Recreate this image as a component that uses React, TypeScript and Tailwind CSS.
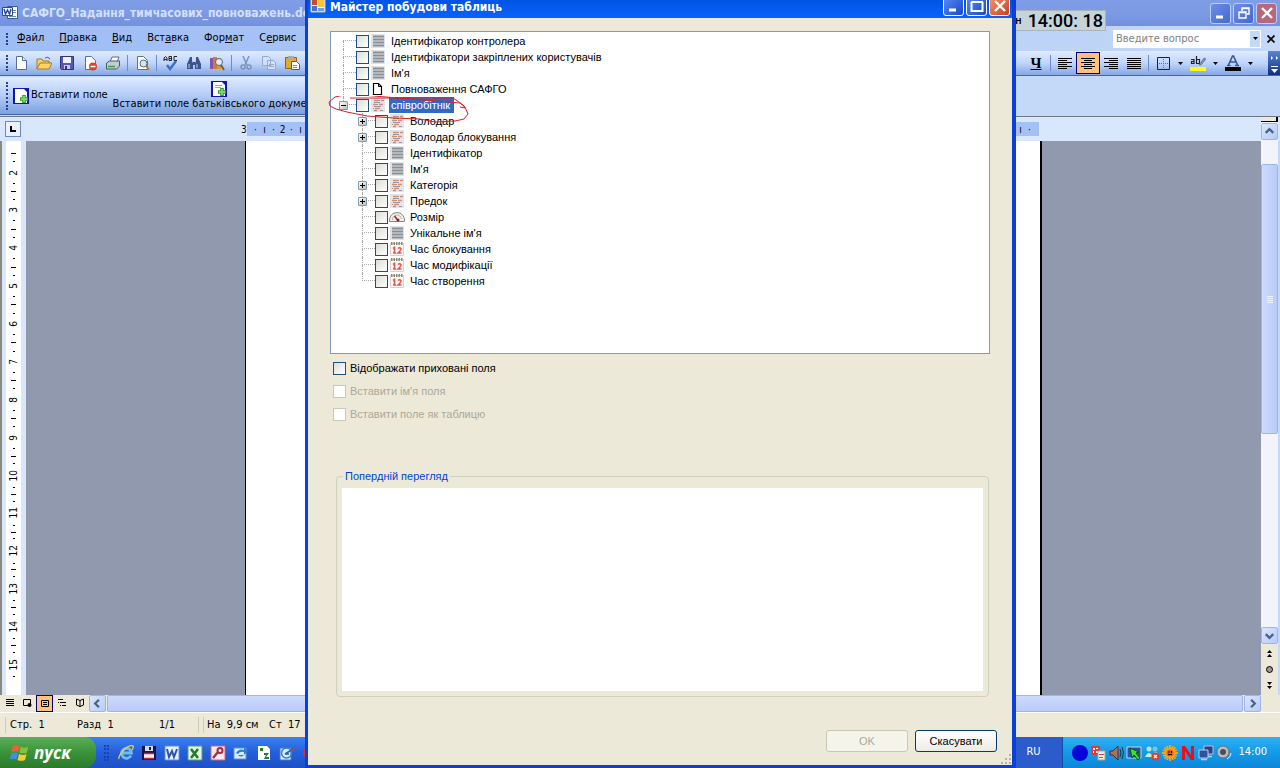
import type { ReactNode } from 'react'
import clsx from 'clsx'

type IconName = 'lines' | 'code' | 'doc' | 'gauge' | 'calendar'

interface TreeItem {
  label: string
  icon: IconName
  level: 0 | 1
  expander?: '+' | '-'
  selected?: boolean
}

const tree: TreeItem[] = [
  { label: 'Ідентифікатор контролера', icon: 'lines', level: 0 },
  { label: 'Ідентифікатори закріплених користувачів', icon: 'lines', level: 0 },
  { label: "Ім'я", icon: 'lines', level: 0 },
  { label: 'Повноваження САФГО', icon: 'doc', level: 0 },
  { label: 'співробітнік', icon: 'code', level: 0, expander: '-', selected: true },
  { label: 'Володар', icon: 'code', level: 1, expander: '+' },
  { label: 'Володар блокування', icon: 'code', level: 1, expander: '+' },
  { label: 'Ідентифікатор', icon: 'lines', level: 1 },
  { label: "Ім'я", icon: 'lines', level: 1 },
  { label: 'Категорія', icon: 'code', level: 1, expander: '+' },
  { label: 'Предок', icon: 'code', level: 1, expander: '+' },
  { label: 'Розмір', icon: 'gauge', level: 1 },
  { label: "Унікальне ім'я", icon: 'lines', level: 1 },
  { label: 'Час блокування', icon: 'calendar', level: 1 },
  { label: 'Час модифікації', icon: 'calendar', level: 1 },
  { label: 'Час створення', icon: 'calendar', level: 1 },
]

const menu = [
  ['', 'Ф', 'айл'],
  ['', 'П', 'равка'],
  ['', 'В', 'ид'],
  ['Вст', 'а', 'вка'],
  ['Фор', 'м', 'ат'],
  ['С', 'е', 'рвис'],
]

const rulerMarks = ['·', 'ı', '·', '2', '·', 'ı', '·', '1']

const checkboxClass =
  'h-[13px] w-[13px] shrink-0 appearance-none border border-[#1c5180] bg-linear-to-br from-[#dcdcd7] to-white disabled:border-[#cac8bb] disabled:bg-none disabled:bg-white'

function Icon({ children, className = 'h-4 w-4' }: { children: ReactNode; className?: string }) {
  return (
    <svg viewBox="0 0 16 16" className={clsx('shrink-0', className)} aria-hidden="true">
      {children}
    </svg>
  )
}

function TreeIcon({ name }: { name: IconName }) {
  if (name === 'lines')
    return (
      <Icon>
        <path d="M1 1h14v14H1z" fill="#dfe3e8" />
        <path d="M3 3.500h11M3 6.500h11M3 9.500h11M3 12.500h11" stroke="#8b8d92" strokeWidth="1.800" />
      </Icon>
    )
  if (name === 'code')
    return (
      <Icon>
        <path d="M1 1h14v14H1z" fill="#e4e4e8" />
        <path d="M4 3.500h4M11 3.500h3M3 7.500h3M9 7.500h4M5 11.500h5M4 13.500h3" stroke="#d88a78" strokeWidth="1.300" />
        <path d="M8 3.500h2M4 5.500h6M6 7.500h2M4 9.500h7M3 11.500h1M10 13.500h3" stroke="#96969a" strokeWidth="1.100" />
      </Icon>
    )
  if (name === 'doc')
    return (
      <Icon>
        <path d="M3.500 2.500h5l3 3v8h-8z" fill="#fff" stroke="#000" strokeWidth="1.200" />
        <path d="M8.500 2.500v3h3" fill="none" stroke="#000" />
      </Icon>
    )
  if (name === 'gauge')
    return (
      <Icon>
        <path d="M.500 12.500v-1.500a7 7 0 0 1 15 0v1.500z" fill="#f3efed" stroke="#8f8580" />
        <path d="M3.500 11a4.500 4.500 0 0 1 9-1" fill="none" stroke="#c9aea2" />
        <path d="M9 11.500 5.500 7" stroke="#8c3428" strokeWidth="1.600" />
        <circle cx="9" cy="11" r="1.500" fill="#733" />
      </Icon>
    )
  return (
    <Icon>
      <path d="M1.500 2.500h13v12h-13z" fill="#f9f6f6" stroke="#d6d2d2" />
      <path d="M2 2.500h12" stroke="#8d8478" strokeWidth="3" strokeDasharray="1.500 1" />
      <path d="M4 7.500 5.500 6.500v5.500M4 12h3M9 7.500q1.500-1.500 3 0 .3 1.500-3 4.500h3.500" fill="none" stroke="#e2574a" strokeWidth="1.600" />
    </Icon>
  )
}

function Guide({ first, last, expander }: { first: boolean; last: boolean; expander?: '+' | '-' }) {
  return (
    <div className="relative flex h-4 w-[22px] shrink-0 flex-col pl-[9px]">
      <div className={clsx('h-2 border-b border-dotted border-[#a8a8a8]', !first && 'border-l')} />
      <div className={clsx('h-2 border-dotted border-[#a8a8a8]', !last && 'border-l')} />
      {expander && (
        <button
          aria-label={expander === '+' ? 'Розгорнути' : 'Згорнути'}
          className="absolute top-1 left-[5px] h-[9px] w-[9px] rounded-[1px] border border-[#8098b0] bg-linear-to-br from-white to-[#c3bab0]"
        >
          <svg viewBox="0 0 7 7" className="h-[7px] w-[7px]" aria-hidden="true">
            <path d={expander === '+' ? 'M1 3.5h5M3.5 1v5' : 'M1 3.5h5'} stroke="#000" />
          </svg>
        </button>
      )}
    </div>
  )
}

function FieldTree() {
  return (
    <ul className="flex h-[323px] flex-col border border-[#7f9db9] bg-white pt-px pl-[3px]">
      {tree.map((item, i) => {
        const isLast = item.level === 0 ? item.expander === '-' : i === tree.length - 1
        return (
          <li key={i} className={clsx('flex h-4 items-center', item.level === 1 && 'pl-[19px]')}>
            <Guide first={i === 0} last={isLast} expander={item.expander} />
            <label className="flex items-center">
              <input type="checkbox" className={checkboxClass} />
              <span className="ml-px flex">
                <TreeIcon name={item.icon} />
              </span>
              <span
                className={clsx(
                  'ml-[3px] h-4 px-[2px] leading-4 whitespace-nowrap',
                  item.selected && 'bg-[#316ac5] pr-1 text-white',
                )}
              >
                {item.label}
              </span>
            </label>
          </li>
        )
      })}
    </ul>
  )
}

function CaptionButton({ kind, muted }: { kind: 'min' | 'max' | 'restore' | 'close'; muted?: boolean }) {
  const names = { min: 'Згорнути', max: 'Розгорнути', restore: 'Відновити', close: 'Закрити' }
  return (
    <button
      aria-label={names[kind]}
      className={clsx(
        'flex h-[21px] w-[21px] items-center justify-center rounded-[3px] border',
        muted ? 'border-[#b9cdf5]' : 'border-white',
        kind === 'close'
          ? muted
            ? 'bg-[#b9677c]'
            : 'bg-linear-to-br from-[#f0957a] to-[#cc3c12]'
          : muted
            ? 'bg-linear-to-br from-[#6d8ee8] to-[#4468d0]'
            : 'bg-linear-to-br from-[#5c8cf5] to-[#1947cb]',
      )}
    >
      <svg viewBox="0 0 16 16" className="h-4 w-4" fill="none" stroke="#fff" aria-hidden="true">
        {kind === 'min' && <path d="M3 12h7" strokeWidth="3" />}
        {kind === 'max' && <path d="M2 4h12M2.500 4v9h11V4" strokeWidth="2" />}
        {kind === 'restore' && <path d="M6 6V3h7v6h-2M6 3.500h7M3 7h7v6H3zM3 7.500h7" strokeWidth="1.400" />}
        {kind === 'close' && <path d="m3 3 10 10m0-10L3 13" strokeWidth="2.400" />}
      </svg>
    </button>
  )
}

function Grip({ className }: { className?: string }) {
  return <span className={clsx('w-[3px] shrink-0 border-l-2 border-dotted border-[#27418c]', className)} />
}

function Divider() {
  return <span className="-mx-px h-4 w-px bg-[#6a8ccb]" />
}

function Tool({ label, children, active }: { label: string; children: ReactNode; active?: boolean }) {
  return (
    <button
      aria-label={label}
      className={clsx('flex shrink-0', active && '-mx-[4px] border border-[#000080] bg-[#ffc27a] px-[3px] py-[2px]')}
    >
      <Icon>{children}</Icon>
    </button>
  )
}

const page = <path d="M3.500 1.500h6l4 4v9h-10z" fill="#fff" stroke="#5b6f9c" />

function Toolbar() {
  return (
    <div className="flex h-[25px] items-center gap-[7px] border-b border-[#4266b0] bg-linear-to-b from-[#dfebff] via-[#c0d5fb] to-[#85a7e4] pl-[6px]">
      <Grip className="-mr-[3px] h-4" />
      <Tool label="Создать">
        {page}
        <path d="M9.500 1.500v4h4" fill="#dbe4f5" stroke="#5b6f9c" />
      </Tool>
      <Tool label="Открыть">
        <path d="M1 14V4h5l1 2h6v3" fill="#f3cf6d" stroke="#a77c22" />
        <path d="m1 14 3-6h12l-3 6z" fill="#ffd268" stroke="#a77c22" />
        <path d="M9 3q3-2 5 1" fill="none" stroke="#365ea8" />
      </Tool>
      <Tool label="Сохранить">
        <path d="M1.500 1.500h13v13h-12l-1-1z" fill="#5758b8" stroke="#33337c" />
        <path d="M4 2h8v6H4z" fill="#eef1fb" />
        <path d="M5 10h6v4H5z" fill="#c9cde2" />
        <path d="M6 11h2v3H6z" fill="#33337c" />
      </Tool>
      <Tool label="Разрешения">
        {page}
        <circle cx="11" cy="11.500" r="4" fill="#d8432c" />
        <path d="M8.500 11.500h5" stroke="#fff" strokeWidth="1.600" />
      </Tool>
      <Tool label="Печать">
        <path d="m5 7 2-5h7l-2 5" fill="#fff" stroke="#5f6f86" />
        <path d="m1.500 8 3-2h10v5l-3 3h-10z" fill="#c3cbd6" stroke="#4d596d" />
        <path d="M3 11.500h7" stroke="#3aa03a" strokeWidth="1.500" />
      </Tool>
      <Divider />
      <Tool label="Предварительный просмотр">
        {page}
        <circle cx="9.500" cy="8.500" r="3.500" fill="#cfe6f8" stroke="#55667a" />
        <path d="m12 11 3 4" stroke="#b87a2c" strokeWidth="2" />
      </Tool>
      <Divider />
      <Tool label="Орфография">
        <path d="M1 6V3l1.500-1.500L4 3v3M1 4.500h3M6 1.500v4h2.500v-4zM6 3.500h3M14 1.500h-3v4h3" fill="none" stroke="#222" />
        <path d="m4 10 3 4 6-8" fill="none" stroke="#3e6fd0" strokeWidth="2.500" />
      </Tool>
      <Tool label="Найти">
        <path d="M4 2h2v4l1 2v6H1V9zM12 2h-2v4L9 8v6h6V9zM7 7h2v3H7z" fill="#3a5490" />
        <path d="M3 9v4M11 9v4" stroke="#b9cdf5" />
      </Tool>
      <Tool label="Справочные материалы">
        <path d="M1 3h3v11H1z" fill="#7c55b8" />
        <path d="M4 2h4v12H4z" fill="#d8792c" />
        <path d="M8 3h4v11H8z" fill="#c79d3d" />
        <circle cx="10" cy="7" r="3.500" fill="#dceefa" stroke="#56677c" />
        <path d="m12 10 3 5" stroke="#8c5a20" strokeWidth="2" />
      </Tool>
      <Divider />
      <Tool label="Вырезать">
        <path d="m5 1 4 9m2-9-4 9" stroke="#7d93be" strokeWidth="1.500" />
        <circle cx="5" cy="12" r="2" fill="none" stroke="#7d93be" strokeWidth="1.500" />
        <circle cx="11" cy="12" r="2" fill="none" stroke="#7d93be" strokeWidth="1.500" />
      </Tool>
      <Tool label="Копировать">
        <path d="M1.500 1.500h6l2 2v7h-8zM6.500 5.500h6l2 2v7h-8z" fill="#d5e0f6" stroke="#93a7d0" />
        <path d="M8 9.500h5M8 11.500h5" stroke="#93a7d0" />
      </Tool>
      <Tool label="Вставить">
        <path d="M1.500 2.500h11v11h-11z" fill="#e3a92f" stroke="#8c631a" />
        <path d="M4 1h6v3H4z" fill="#a9a9a9" />
        <path d="M7.500 6.500h5l3 3v5h-8z" fill="#fff" stroke="#4c5d86" />
        <path d="M9 10.500h4M9 12.500h4" stroke="#7789b5" />
      </Tool>

      <div className="ml-auto flex h-full items-center gap-[7px]">
        <button className="w-4 text-center font-['Liberation_Serif'] text-[15px] leading-4 font-bold underline">Ч</button>
        <Divider />
        <Tool label="По левому краю">
          <path d="M1 3.500h14M1 5.500h9M1 7.500h14M1 9.500h9M1 11.500h14M1 13.500h9" stroke="#000" />
        </Tool>
        <Tool label="По центру" active>
          <path d="M1 3.500h14M4 5.500h8M1 7.500h14M4 9.500h8M1 11.500h14M4 13.500h8" stroke="#000" />
        </Tool>
        <Tool label="По правому краю">
          <path d="M1 3.500h14M6 5.500h9M1 7.500h14M6 9.500h9M1 11.500h14M6 13.500h9" stroke="#000" />
        </Tool>
        <Tool label="По ширине">
          <path d="M1 3.500h14M1 5.500h14M1 7.500h14M1 9.500h14M1 11.500h14M1 13.500h14" stroke="#000" />
        </Tool>
        <Divider />
        <Tool label="Границы">
          <path d="M2.500 2.500h12v12h-12z" fill="none" stroke="#222" />
          <path d="M8.500 4v10M4 8.500h10" stroke="#5673a8" strokeDasharray="1 1" />
        </Tool>
        <DropArrow />
        <Tool label="Выделение цветом">
          <path d="M0 12h16v4H0z" fill="#ffff00" />
          <path d="M1 4.500h3v4H1.500v-2h3M6.500 1v7.500h3v-4h-3" fill="none" stroke="#222" strokeWidth="1.200" />
          <path d="m9 10 5-7 2 1-5 6z" fill="#8295b8" stroke="#4d5f86" strokeWidth=".600" />
        </Tool>
        <DropArrow />
        <Tool label="Цвет шрифта">
          <path d="M0 12h16v4H0z" fill="#000" />
          <path d="m3.500 10 4-9h1l4 9M5.500 7h5M2 10.500h3.500M10 10.500h4" fill="none" stroke="#3b5791" strokeWidth="1.600" />
        </Tool>
        <DropArrow />
        <button aria-label="Параметры панели" className="ml-2 flex h-full w-3 items-center bg-linear-to-b from-[#5b84d4] to-[#0f2f86]">
          <svg viewBox="0 0 12 24" className="h-6 w-3" aria-hidden="true">
            <path d="m3 5 2 2-2 2zM8 5l2 2-2 2zM3 18h7l-3.500 4zM3 15h7v1H3z" fill="#fff" />
          </svg>
        </button>
      </div>
    </div>
  )
}

function DropArrow() {
  return (
    <svg viewBox="0 0 5 3" className="h-[3px] w-[5px]" aria-hidden="true">
      <path d="M0 0h5L2.500 3z" />
    </svg>
  )
}

function InsertIcon({ lines }: { lines?: boolean }) {
  return (
    <Icon>
      <path d="M0 0h16v16H0z" fill="#1414b4" />
      <path d="M2 1h9l3 3v11H2z" fill="#fff" />
      {lines && <path d="M4 4.500h7M4 6.500h6" stroke="#9aa3c9" />}
      <path d="M11 7v8M7 11h8" stroke="#2f9e2a" strokeWidth="3.600" />
      <path d="M11 8v6M8 11h6" stroke="#74d95c" strokeWidth="2" />
    </Icon>
  )
}

function ScrollButton({ dir }: { dir: 'up' | 'down' | 'left' | 'right' }) {
  const d = {
    up: 'm4 9.500 4-4 4 4',
    down: 'm4 6.500 4 4 4-4',
    left: 'm9.500 4-4 4 4 4',
    right: 'm6.500 4 4 4-4 4',
  }
  return (
    <button
      aria-label={`Прокрутка ${dir}`}
      className="h-[17px] w-[17px] shrink-0 rounded-[2px] border border-[#9eb5e6] bg-linear-to-br from-[#dbe6fe] to-[#b6cbf9]"
    >
      <svg viewBox="0 0 16 16" className="h-[15px] w-[15px]" aria-hidden="true">
        <path d={d[dir]} fill="none" stroke="#4d6185" strokeWidth="2.400" />
      </svg>
    </button>
  )
}

function WordWindow() {
  return (
    <div className="flex min-h-0 flex-1 flex-col bg-[#c4d8f8]">
      <header className="flex h-[26px] shrink-0 items-center bg-linear-to-b from-[#7f9ce6] via-[#7d9ae5] to-[#7290de] pr-[3px] pl-[2px]">
        <Icon>
          <path d="M5.500 1.500h10v12h-10z" fill="#fff" stroke="#3c5a9c" />
          <path d="M11 5.500h3M11 7.500h3M7 11.500h7" stroke="#6f88c0" />
          <path d="M.500 2.500h10v8H.500z" fill="#eef3ff" stroke="#2a4b97" />
          <path d="m2 4 1.500 5L5.500 5l2 4L9 4" fill="none" stroke="#2a4b97" strokeWidth="1.400" />
        </Icon>
        <h1 className="ml-1 font-['DejaVu_Sans_Condensed'] text-[12px] font-bold whitespace-nowrap text-[#d3e0fa]">
          САФГО_Надання_тимчасових_повноважень.doc
        </h1>
        <div className="ml-auto flex gap-[2px]">
          <CaptionButton kind="min" muted />
          <CaptionButton kind="restore" muted />
          <CaptionButton kind="close" muted />
        </div>
      </header>

      <nav className="flex h-[25px] shrink-0 items-center bg-linear-to-r from-[#9ebcf5] to-[#c4d8f8] pl-[6px]">
        <Grip className="h-3" />
        <div className="ml-2 flex gap-[15px]">
          {menu.map(([before, key, after]) => (
            <button key={before + key}>
              {before}
              <u>{key}</u>
              {after}
            </button>
          ))}
        </div>
        <div className="ml-auto flex items-center">
          <input
            aria-label="Введите вопрос"
            placeholder="Введите вопрос"
            className="h-[18px] w-[136px] bg-white pl-[3px] placeholder:text-[#808080]"
          />
          <button aria-label="Список вопросов" className="flex h-[18px] w-3 items-center justify-center border border-white bg-[#c4d8f8]">
            <DropArrow />
          </button>
          <button aria-label="Закрыть документ" className="mr-[5px] ml-[6px]">
            <svg viewBox="0 0 8 8" className="h-2 w-2" aria-hidden="true">
              <path d="m.5.500 7 7m0-7-7 7" stroke="#000" strokeWidth="1.700" />
            </svg>
          </button>
        </div>
      </nav>

      <Toolbar />

      <div className="h-[40px] shrink-0 pt-px">
        <div className="flex h-[38px] w-[400px] items-center border-b border-[#4266b0] bg-linear-to-b from-[#dfebff] via-[#b4ccf7] to-[#7b9fe0] pl-[6px]">
          <Grip className="h-7" />
          <button className="ml-1 flex items-center gap-[2px] whitespace-nowrap">
            <InsertIcon />
            Вставити поле
          </button>
          <button className="ml-[5px] flex flex-col items-center whitespace-nowrap">
            <InsertIcon lines />
            <span className="leading-[14px]">Вставити поле батьківського документа</span>
          </button>
        </div>
      </div>

      <div className="flex h-[25px] shrink-0 items-center border-t border-[#6f7683] bg-[#d8e7fc]">
        <div className="ml-[5px] flex h-4 w-4 items-center justify-center border border-[#6d87c4] bg-[#eaf1fd]">
          <svg viewBox="0 0 6 6" className="h-[6px] w-[6px]" aria-hidden="true">
            <path d="M1 0v5h5" fill="none" stroke="#000" strokeWidth="2" />
          </svg>
        </div>
        <span className="ml-[220px] w-[6px] text-[10px]">3</span>
        <div className="mr-[241px] flex h-[14px] flex-1 items-center bg-[#a4c0f5] pl-1 text-[10px]">
          {rulerMarks.map((mark, i) => (
            <span key={i} className="w-[9px] text-center">
              {mark}
            </span>
          ))}
          <span className="ml-auto w-[9px] text-center">ı</span>
          <span className="mr-[5px] w-[9px] text-center">·</span>
        </div>
      </div>

      <div className="flex min-h-0 flex-1">
        <div className="flex w-[26px] shrink-0 flex-col border-l-2 border-[#8a8a80] bg-[#d8e7fc] pl-1">
          <div className="flex w-[15px] flex-1 flex-col bg-white pt-3 pb-3 text-[10px]">
            {Array.from({ length: 14 }, (_, i) => (
              <div key={i} className="flex flex-1 flex-col items-center justify-between">
                <span className="h-px w-[5px] bg-black" />
                <span className="h-px w-[2px] bg-black" />
                <span className="rotate-180 leading-[15px] [writing-mode:vertical-rl]">{i + 2}</span>
                <span className="h-px w-[2px] bg-black" />
                <span />
              </div>
            ))}
          </div>
        </div>
        <main className="flex flex-1 bg-[#9199ae] pr-[219px] pl-[219px]">
          <div className="flex-1 border-r-2 border-l border-black bg-white" />
        </main>
        <div className="-mt-6 mr-[2px] flex w-[17px] shrink-0 flex-col bg-[#f3f4fa]">
          <div className="mb-px h-[5px] shrink-0 border-r-2 border-b border-black bg-[#ece9d8]" />
          <ScrollButton dir="up" />
          <div className="flex flex-1 flex-col pt-6">
            <div className="flex h-[270px] flex-col items-center justify-center gap-px rounded-[2px] border border-[#9eb5e6] bg-linear-to-r from-[#cddafd] to-[#b9cbf8]">
              {[0, 1, 2, 3].map((n) => (
                <span key={n} className="h-px w-[6px] bg-[#eef4fe]" />
              ))}
            </div>
          </div>
          <ScrollButton dir="down" />
          <div className="flex h-[51px] shrink-0 flex-col items-center justify-between bg-[#ece9d8] py-[6px]">
            <svg viewBox="0 0 7 7" className="h-[7px] w-[7px]" aria-hidden="true">
              <path d="m1 3 2.500-3L6 3zM1 7l2.500-3L6 7z" />
            </svg>
            <span className="h-[7px] w-[7px] rounded-full border border-black bg-[#9a9a9a]" />
            <svg viewBox="0 0 7 7" className="h-[7px] w-[7px]" aria-hidden="true">
              <path d="m1 0 2.500 3L6 0zM1 4l2.500 3L6 4z" />
            </svg>
          </div>
        </div>
      </div>

      <div className="flex h-[17px] shrink-0 items-center bg-[#ece9d8] pr-[19px] pl-[2px]">
        <ViewButtons />
        <ScrollButton dir="left" />
        <div className="mx-px h-[17px] flex-1 rounded-[2px] border border-[#9eb5e6] bg-linear-to-b from-[#cddafd] to-[#b9cbf8]" />
        <ScrollButton dir="right" />
      </div>

      <footer className="flex h-[25px] shrink-0 items-center border-t border-white bg-[#ece9d8] pl-[5px] whitespace-pre">
        <div className="flex h-4 w-[194px] items-center border-x border-[#cfccba] pl-1">
          <span className="w-[67px]">Стр.  1</span>
          <span className="w-[82px]">Разд  1</span>
          <span>1/1</span>
        </div>
        <div className="ml-1 flex h-4 flex-1 items-center border-l border-[#cfccba] pl-[3px]">
          <span className="w-[62px]">На  9,9 см</span>
          <span>Ст  17</span>
        </div>
      </footer>
    </div>
  )
}

function ViewButtons() {
  return (
    <div className="flex gap-px">
      <button aria-label="Обычный" className="flex h-4 w-4 items-center justify-center">
        <Icon>
          <path d="M4 4.500h8M4 6.500h8M4 8.500h8M4 10.500h8" stroke="#000" />
        </Icon>
      </button>
      <button aria-label="Веб-документ" className="flex h-4 w-4 items-center justify-center">
        <Icon>
          <path d="M4.500 4.500h7v6h-7z" fill="none" stroke="#000" />
          <circle cx="10.500" cy="10" r="2" />
        </Icon>
      </button>
      <button aria-label="Разметка страницы" className="flex h-[17px] w-[17px] items-center justify-center border border-[#000080] bg-[#ffc27a]">
        <Icon>
          <path d="M4.500 4.500h7v6h-7zM6 6.500h4M6 8.500h4" fill="none" stroke="#000" />
        </Icon>
      </button>
      <button aria-label="Структура" className="flex h-4 w-4 items-center justify-center">
        <Icon>
          <path d="M4 4.500h5M6 7.500h6M8 10.500h4M4 7.500h1M6 10.500h1" stroke="#000" />
        </Icon>
      </button>
      <button aria-label="Режим чтения" className="flex h-4 w-[18px] items-center justify-center">
        <Icon>
          <path d="M8 5.500 4.500 4v6L8 11.500 11.500 10V4zV12" fill="none" stroke="#000" />
        </Icon>
      </button>
    </div>
  )
}

function Taskbar() {
  return (
    <div className="flex h-[31px] shrink-0 items-stretch bg-linear-to-b from-[#3c81f0] via-[#245edb] to-[#1f50c4]">
      <button className="flex w-24 items-center gap-1 rounded-r-xl bg-linear-to-b from-[#5cae5a] via-[#3a9339] to-[#2c7a2b] pl-[10px] font-['Open_Sans'] text-[17px] font-bold text-white italic">
        <Icon className="h-5 w-5">
          <path d="M2 3q3-2 5.500-.500L6.500 7Q4 6 1 7.500z" fill="#f0622d" />
          <path d="M8.500 3q3 1.500 6 0l-1 4.500q-3 1.500-6 0z" fill="#83c33c" />
          <path d="M1 8.500Q4 7 6.300 8.200L5 13Q3 12-.200 13z" fill="#3e8ef0" />
          <path d="M7.300 8.800q3 1.500 6 0l-1.300 4.700q-3 1.500-6 0z" fill="#fbc932" />
        </Icon>
        пуск
      </button>
      <div className="flex items-center gap-[7px] pl-2">
        <span className="mr-[2px] h-4 w-[5px] border-x-2 border-dotted border-[#1a43a8]" />
        <Icon>
          <path d="M13 10.500a5 5 0 1 1 .500-2.500H4" fill="none" stroke="#6bbdf2" strokeWidth="2.800" />
          <path d="M1 14Q0 11 6 5t9-4q1 1-1 4" fill="none" stroke="#f2cc4b" strokeWidth="1.300" />
        </Icon>
        <Icon>
          <path d="M1 1h14v14H1z" fill="#15154e" />
          <path d="M4 1h8v5H4z" fill="#d5d9ee" />
          <path d="M8 2h2v3H8z" fill="#15154e" />
          <path d="M3 8h10v6H3z" fill="#f2f2f2" />
          <path d="M3 8.500h10M3 13.500h10" stroke="#d22" strokeWidth="1.500" />
        </Icon>
        <Icon>
          <path d="M1 1h14v14H1z" fill="#e7eefb" stroke="#6c8cc8" />
          <path d="m3 4 2 8 3-6 2 6 3-8" fill="none" stroke="#2b55a8" strokeWidth="2" />
        </Icon>
        <Icon>
          <path d="M1 1h14v14H1z" fill="#e5f3e5" stroke="#59a35c" />
          <path d="m4 4 7 9M11 4l-7 9" stroke="#1f7a2c" strokeWidth="2.500" />
        </Icon>
        <Icon>
          <path d="M1 1h14v14H1z" fill="#fbe9ec" stroke="#c66b7a" />
          <circle cx="10" cy="5.500" r="2.500" fill="none" stroke="#a62a40" strokeWidth="2" />
          <path d="m8 7-5 6" stroke="#a62a40" strokeWidth="2.300" />
        </Icon>
        <Icon>
          <path d="M1 3h12v11H1z" fill="#d9eaf9" stroke="#5f94cc" />
          <path d="M3 8q3-5 8-3V2l4 4-4 4V7Q7 6 5 9zM5 10q3 3 6 0" fill="#2c7cd4" />
        </Icon>
        <Icon>
          <path d="M2 1h9l3 3v11H2z" fill="#fff" />
          <path d="M4 3h3v3H4zM8 8h5l-3 4h3v2H8l2-4H8z" fill="#247a2e" />
        </Icon>
        <Icon>
          <path d="M1 3h11v12H1z" fill="#d9eaf9" stroke="#3d7fc5" />
          <circle cx="7.500" cy="8" r="5" fill="none" stroke="#3d7fc5" strokeWidth="1.500" />
          <path d="m6 9 8-5M6 9h4" stroke="#2264b0" strokeWidth="1.500" />
          <circle cx="14" cy="5" r="1.500" fill="#d33" />
        </Icon>
        <Icon>
          <circle cx="8" cy="8" r="7" fill="#d8342a" />
        </Icon>
      </div>

      <div className="ml-auto flex items-center text-white">
        <span className="flex h-full w-[52px] items-center bg-[#2c5bcb] pl-4">RU</span>
        <div className="flex h-full items-center gap-[2px] border-l border-[#0d4f9e] bg-linear-to-b from-[#2fb0f2] via-[#139ae8] to-[#0f86d8] pr-[13px] pl-[9px]">
          <Icon>
            <circle cx="8" cy="8" r="8" fill="#0606d8" />
          </Icon>
          <Icon>
            <path d="M1 1h9v9H1z" fill="#e03b3b" />
            <path d="M3 3h2v2H3zM6 6h2v2H6zM6 3h2v1H6zM3 6h1v2H3z" fill="#fff" />
            <path d="M8 6h7v9H8z" fill="#f0eee0" stroke="#a9a48c" />
            <path d="M9 9.500h5M9 12.500h4" stroke="#cc4477" />
          </Icon>
          <Icon>
            <path d="M2 6h3l5-5v14l-5-5H2z" fill="#b0705c" stroke="#4c2a24" />
            <path d="M12 4q2 4 0 8M14 2q3 6 0 12" fill="none" stroke="#26323e" />
          </Icon>
          <Icon>
            <path d="M1 2h14v11H1z" fill="#2454a4" stroke="#c9d2dc" />
            <path d="m4 3 9 4-3 1 4 5-2 2-4-5-2 3z" fill="#3ce03c" stroke="#07540a" />
          </Icon>
          <Icon>
            <circle cx="5" cy="4" r="2.500" fill="#b9e3c6" />
            <circle cx="11" cy="4" r="2.500" fill="#6fc8e8" />
            <path d="M1 12q4-8 8 0zM8 10q4-6 7 0z" fill="#c8ecd4" />
            <circle cx="11.500" cy="11.500" r="4" fill="#e03c26" />
            <path d="m10 10 3 3m0-3-3 3" stroke="#fff" strokeWidth="1.300" />
          </Icon>
          <Icon>
            <path d="M8 0v16M0 8h16M2.500 2.500l11 11M13.500 2.500l-11 11M5 1l6 14M11 1 5 15M1 5l14 6M1 11l14-6" stroke="#f7a41c" strokeWidth="1.800" />
            <circle cx="8" cy="8" r="3.500" fill="#e0601a" />
            <path d="M7 6v2M9.500 6v2M6 9.500h4" stroke="#330000" />
          </Icon>
          <Icon>
            <path d="M2 15V1h3l6 9V1h3v14h-3L5 6v9z" fill="#e80f1c" />
          </Icon>
          <Icon>
            <path d="M6 1h9v8H6z" fill="#27408c" stroke="#b6c2dc" />
            <path d="M1 5h9v8H1z" fill="#31509f" stroke="#c3cde2" />
            <path d="M3 14.500h6M10 11.500h4" stroke="#c3cde2" strokeWidth="1.500" />
          </Icon>
          <Icon>
            <circle cx="7" cy="7" r="6" fill="#b9bcc0" stroke="#6c6f74" />
            <circle cx="7" cy="7" r="3" fill="#4b4e54" />
            <path d="M11 14q4-2 4-6" fill="none" stroke="#e4f0fa" />
          </Icon>
          <span className="ml-1">14:00</span>
        </div>
      </div>
    </div>
  )
}

function WizardDialog() {
  return (
    <section className="absolute inset-y-0 right-[264px] left-[305px] flex flex-col border-x-[3px] border-r-4 border-b-[3px] border-[#0a3fd8] bg-[#ece9d8] font-['Liberation_Sans'] text-[11px]">
      <header className="flex h-[18px] shrink-0 items-end bg-linear-to-b from-[#0054e3] to-[#0a62fb] pl-[2px]">
        <Icon className="mb-1 h-4 w-4">
          <path d="M1 1h14v13H1z" fill="#f5f2e6" stroke="#c9c3a8" />
          <path d="M2 2h5v5H2z" fill="#c94a2f" />
          <path d="M8 2h6v7H8z" fill="#f5c53c" />
          <path d="M2 8h5v5H2z" fill="#3f74d8" />
          <path d="M8 10h6v3H8z" fill="#6aa0ea" />
        </Icon>
        <h2 className="mb-1 ml-1 font-['DejaVu_Sans_Condensed'] text-[12px] leading-[14px] font-bold text-white">
          Майстер побудови таблиць
        </h2>
        <div className="mr-[2px] mb-[2px] ml-auto flex gap-[2px]">
          <CaptionButton kind="min" />
          <CaptionButton kind="max" />
          <CaptionButton kind="close" />
        </div>
      </header>

      <div className="flex flex-1 flex-col px-[22px] pt-[13px]">
        <FieldTree />
        <div className="flex flex-col gap-[7px] pt-[6px] pl-[3px]">
          <label className="flex h-4 items-center gap-1">
            <input type="checkbox" className={checkboxClass} />
            Відображати приховані поля
          </label>
          <label className="flex h-4 items-center gap-1 text-[#aca899]">
            <input type="checkbox" disabled className={checkboxClass} />
            Вставити ім'я поля
          </label>
          <label className="flex h-4 items-center gap-1 text-[#aca899]">
            <input type="checkbox" disabled className={checkboxClass} />
            Вставити поле як таблицю
          </label>
        </div>
        <fieldset className="mt-12 mr-px ml-[6px] flex h-[227px] flex-col rounded-[4px] border border-[#d0d0bf] px-[5px] pb-[5px]">
          <legend className="ml-px px-[2px] leading-3 text-[#0046d5]">Попердній перегляд</legend>
          <div className="mt-[6px] h-[203px] bg-white" />
        </fieldset>
        <div className="mt-auto -mr-[7px] mb-[13px] flex justify-end gap-[7px]">
          <button disabled className="h-[22px] w-[82px] rounded-[3px] border border-[#c9c7ba] bg-[#f5f4ea] text-[#aca899]">
            OK
          </button>
          <button className="h-[22px] w-[82px] rounded-[3px] border border-[#003c74] bg-linear-to-b from-white to-[#ecebe6]">
            Скасувати
          </button>
        </div>
      </div>

      <svg viewBox="0 0 11 11" className="absolute right-0 bottom-0 h-[11px] w-[11px]" aria-hidden="true">
        <path d="M8 0h2v2H8zM8 4h2v2H8zM4 4h2v2H4zM8 8h2v2H8zM4 8h2v2H4zM0 8h2v2H0z" fill="#b8b4a3" />
      </svg>

      <svg viewBox="0 0 144 28" className="pointer-events-none absolute top-24 left-5 h-7 w-36" aria-hidden="true">
        <path
          d="M22 2h103l6 4 4 3 2 3-5-1M132 7l5 4 3 7-4 5-9 2-20 1-15-3-26-1-27-2-20-4-11-3-6-3-1-4 6-5 14-3z"
          fill="none"
          stroke="#d8202c"
        />
      </svg>
    </section>
  )
}

export default function App() {
  return (
    <div className="relative flex h-screen flex-col overflow-hidden font-['DejaVu_Sans_Condensed'] text-[11px] text-black">
      <WordWindow />
      <Taskbar />
      <div className="absolute top-[10px] right-[174px] flex h-[21px] w-[110px] items-center justify-end border border-[#aab4b8] bg-[#c6d3d9] pr-[2px] font-['Roboto'] text-[18px] leading-5 font-medium whitespace-pre">
        <span className="mr-[6px] text-[11px]">н</span>14:00: 18
      </div>
      <WizardDialog />
    </div>
  )
}
